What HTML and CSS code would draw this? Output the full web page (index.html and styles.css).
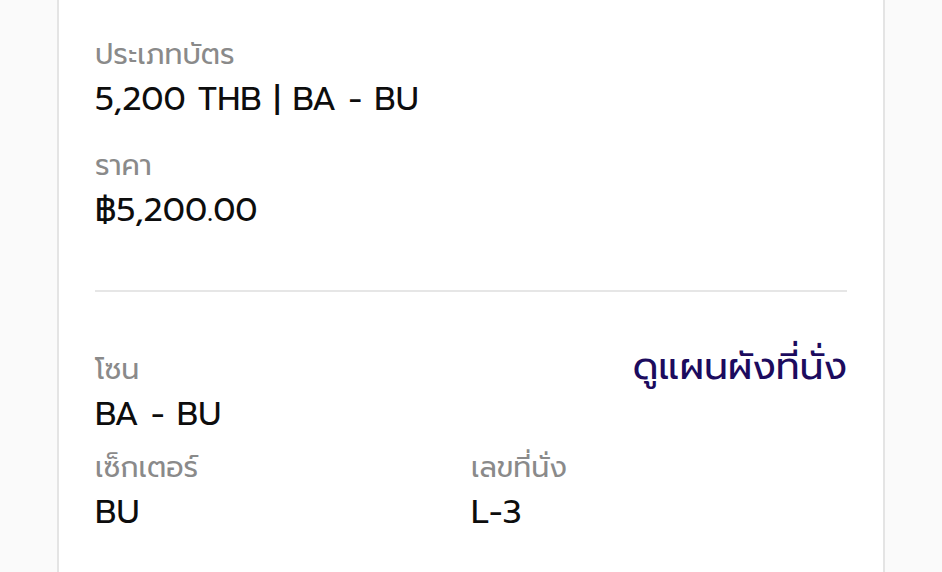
FILE: index.html
```html
<!DOCTYPE html>
<html lang="th">
<head>
  <meta charset="UTF-8">
  <title>รายละเอียดบัตร</title>
  <link rel="stylesheet" href="styles.css">
</head>
<body>

  <div class="card">
    <div class="ticket-info">
      <div class="field">
        <div class="label">ประเภทบัตร</div>
        <div class="value">5,200 THB | BA - BU</div>
      </div>

      <div class="field">
        <div class="label">ราคา</div>
        <div class="value">฿5,200.00</div>
      </div>
    </div>

    <hr class="divider">

    <div class="seat-info">
      <div class="zone-row">
        <div class="field">
          <div class="label">โซน</div>
          <div class="value">BA - BU</div>
        </div>
        <a href="#" class="seat-map-link">ดูแผนผังที่นั่ง</a>
      </div>

      <div class="seat-grid">
        <div class="field">
          <div class="label">เซ็กเตอร์</div>
          <div class="value">BU</div>
        </div>
        <div class="field">
          <div class="label">เลขที่นั่ง</div>
          <div class="value">L-3</div>
        </div>
      </div>
    </div>
  </div>

</body>
</html>
```

FILE: styles.css
```css
body {
  margin: 0;
  padding: 0;
  background-color: #fafafa;
  font-family: 'Prompt', 'Noto Sans Thai', sans-serif;
  color: #0d0d0d;
}

.card {
  margin: 0 57px;
  background: #fff;
  border-left: 2px solid #e4e4e4;
  border-right: 2px solid #e4e4e4;
  padding: 37px 36px 40px 36px;
  min-height: 572px;
  box-sizing: border-box;
}

.ticket-info {
  display: flex;
  flex-direction: column;
  gap: 27px;
}

.seat-info {
  display: flex;
  flex-direction: column;
  gap: 14px;
}

.label {
  font-size: 28.5px;
  line-height: 36px;
  color: #8a8a8a;
}

.value {
  font-size: 33px;
  line-height: 44px;
  color: #0d0d0d;
  margin-top: 4px;
}

.divider {
  border: none;
  border-top: 2px solid #e6e6e6;
  margin: 58px 0 53px 0;
}

.zone-row {
  display: flex;
  justify-content: space-between;
  align-items: baseline;
}

.seat-map-link {
  font-size: 38px;
  line-height: 44px;
  color: #1c0b5e;
  text-decoration: none;
}

.seat-grid {
  display: grid;
  grid-template-columns: 1fr 1fr;
}
```
